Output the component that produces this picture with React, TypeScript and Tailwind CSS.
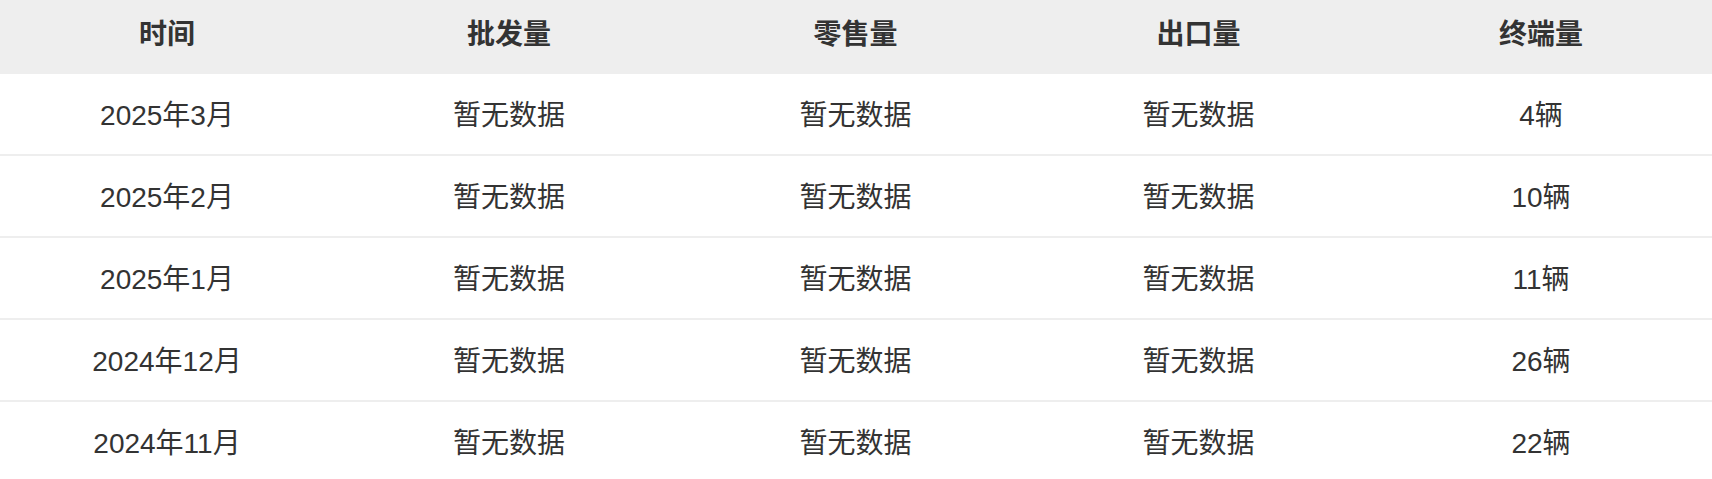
const columns = ["时间", "批发量", "零售量", "出口量", "终端量"];

const rows = [
  { month: "2025年3月", wholesale: "暂无数据", retail: "暂无数据", exports: "暂无数据", terminal: "4辆" },
  { month: "2025年2月", wholesale: "暂无数据", retail: "暂无数据", exports: "暂无数据", terminal: "10辆" },
  { month: "2025年1月", wholesale: "暂无数据", retail: "暂无数据", exports: "暂无数据", terminal: "11辆" },
  { month: "2024年12月", wholesale: "暂无数据", retail: "暂无数据", exports: "暂无数据", terminal: "26辆" },
  { month: "2024年11月", wholesale: "暂无数据", retail: "暂无数据", exports: "暂无数据", terminal: "22辆" },
];

const grid = "grid grid-cols-[334px_350px_343px_343px_1fr]";

export default function App() {
  return (
    <div className="w-[1712px] bg-white text-[#333333] font-['Liberation_Sans','Noto_Sans_CJK_SC',sans-serif] text-[28px]">
      {/* Header */}
      <div className={`${grid} h-[74px] bg-[#eeeeee] items-center pb-[4px]`}>
        {columns.map((c) => (
          <div key={c} className="text-center font-bold">
            {c}
          </div>
        ))}
      </div>

      {/* Body */}
      {rows.map((r) => (
        <div key={r.month} className={`${grid} h-[82px] items-center border-b-2 border-[#eeeeee] pt-[4px]`}>
          <div className="text-center">{r.month}</div>
          <div className="text-center">{r.wholesale}</div>
          <div className="text-center">{r.retail}</div>
          <div className="text-center">{r.exports}</div>
          <div className="text-center">{r.terminal}</div>
        </div>
      ))}
    </div>
  );
}
